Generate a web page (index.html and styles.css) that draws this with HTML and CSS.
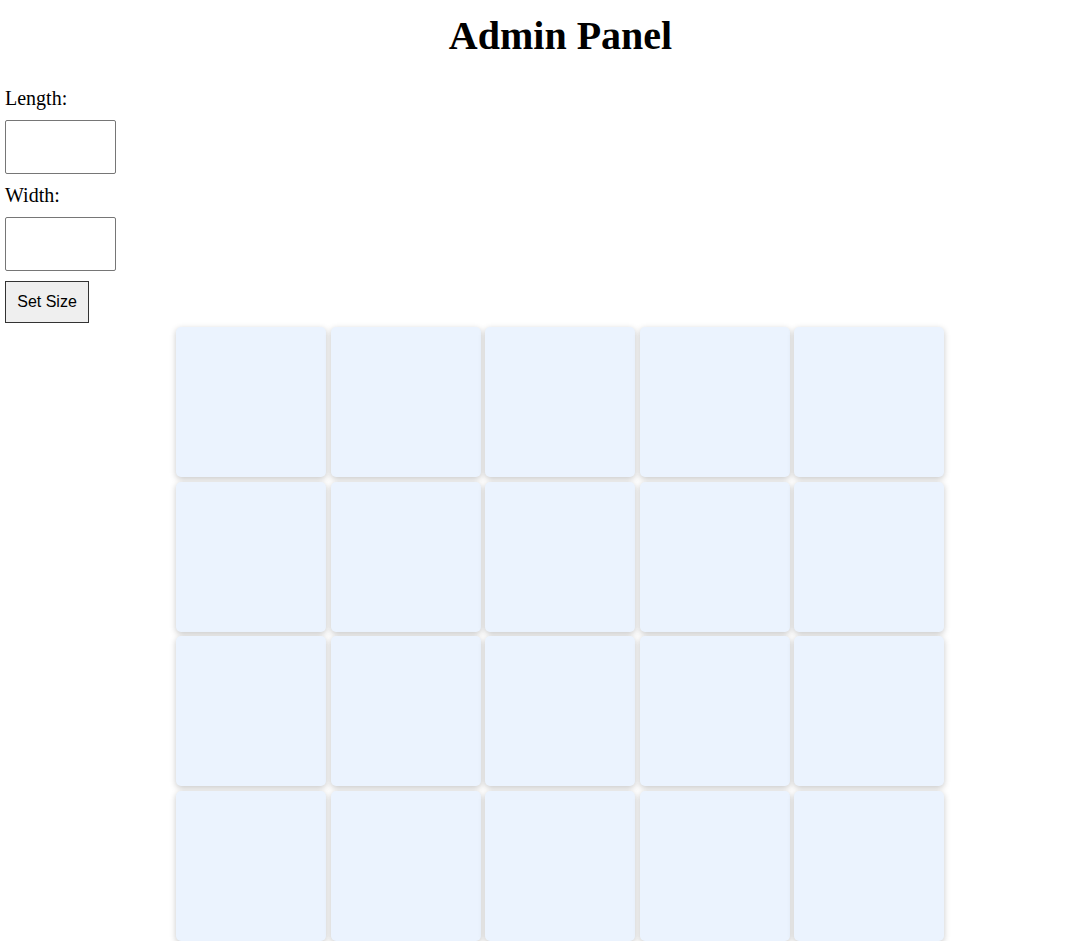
FILE: index.html
```html
<!DOCTYPE html>
<html>
<head>
<meta charset="utf-8">
<title>Admin Panel</title>
<link rel="stylesheet" href="styles.css">
</head>
<body>
<h1 class="title">Admin Panel</h1>
<form class="size-form">
  <label class="field-label" for="len">Length:</label>
  <input class="field-input" id="len" type="text">
  <label class="field-label" for="wid">Width:</label>
  <input class="field-input" id="wid" type="text">
  <button class="set-btn" type="button">Set Size</button>
</form>
<div class="board">
  <div class="cell"></div><div class="cell"></div><div class="cell"></div><div class="cell"></div><div class="cell"></div>
  <div class="cell"></div><div class="cell"></div><div class="cell"></div><div class="cell"></div><div class="cell"></div>
  <div class="cell"></div><div class="cell"></div><div class="cell"></div><div class="cell"></div><div class="cell"></div>
  <div class="cell"></div><div class="cell"></div><div class="cell"></div><div class="cell"></div><div class="cell"></div>
</div>
</body>
</html>
```
FILE: styles.css
```css
html, body {
  margin: 0;
  padding: 0;
  background: #ffffff;
}
body {
  font-family: "Liberation Serif", "Times New Roman", serif;
  color: #000;
  overflow: hidden;
}
.title {
  margin: 13px 0 0 34px;
  font-size: 40px;
  line-height: 46px;
  font-weight: bold;
  text-align: center;
}
.size-form {
  display: flex;
  flex-direction: column;
  align-items: flex-start;
  gap: 10px;
  margin: 28px 0 0 5px;
}
.field-label {
  font-size: 20px;
  line-height: 23px;
}
.field-input {
  box-sizing: border-box;
  width: 111px;
  height: 54px;
  margin: 0;
  border: 1px solid #767676;
  border-radius: 2px;
  background: #fff;
}
.set-btn {
  box-sizing: border-box;
  width: 84px;
  height: 42px;
  margin: 0;
  padding: 0;
  font-family: "Liberation Sans", Arial, sans-serif;
  font-size: 16px;
  color: #000;
  background: #efefef;
  border: 1px solid #333;
  border-radius: 0;
}
.board {
  display: grid;
  grid-template-columns: repeat(5, 150px);
  grid-auto-rows: 150px;
  gap: 4.5px;
  width: 768px;
  margin: 4px 0 0 176px;
}
.cell {
  background: #ebf3fe;
  border-radius: 5px;
  box-shadow: 0 2px 6px rgba(0, 0, 0, 0.22);
}
```
